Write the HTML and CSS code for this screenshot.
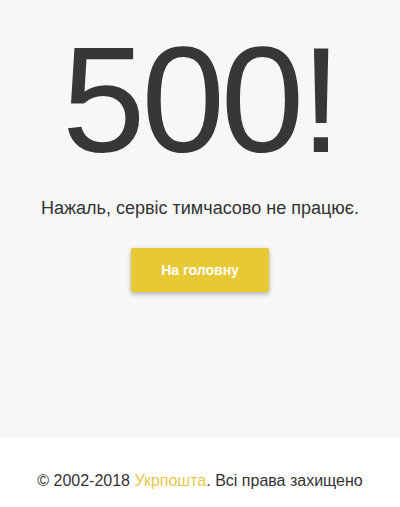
FILE: index.html
```html
<!DOCTYPE html>
<html lang="uk">
<head>
	<meta charset="UTF-8">
	<title>500</title>
	<link rel="stylesheet" href="styles.css">
</head>
<body>
	<div id="main">
		<h1 class="code">500!</h1>
		<p class="message">Нажаль, сервіс тимчасово не працює.</p>
		<a href="#" class="btn-home">На головну</a>
	</div>
	<div id="footer">
		&copy; 2002-2018 <a href="#">Укрпошта</a>. Всі права захищено
	</div>
</body>
</html>
```
FILE: styles.css
```css
*{
	margin:0;
	padding:0;
}
body{
	font-family:"Liberation Sans", Arial, sans-serif;
	color:#333;
	background-color:#fff;
}
#main{
	height:437px;
	background-color:#f7f7f7;
	text-align:center;
	display:flex;
	flex-direction:column;
	align-items:center;
}
.code{
	font-size:150px;
	font-weight:400;
	line-height:1;
	letter-spacing:-4px;
	color:#373737;
	padding-top:25px;
}
.message{
	font-size:18px;
	margin-top:23px;
	color:#333;
}
.btn-home{
	display:block;
	width:138px;
	height:44px;
	line-height:44px;
	margin-top:29px;
	background-color:#e7c935;
	color:#fff;
	font-size:14px;
	font-weight:bold;
	text-decoration:none;
	border-radius:2px;
	box-shadow:0 2px 5px rgba(0,0,0,.3);
}
#footer{
	height:70px;
	line-height:70px;
	text-align:center;
	font-size:16px;
	color:#333;
	padding-top:9px;
}
#footer a{
	color:#e5c84a;
	text-decoration:none;
}
```
